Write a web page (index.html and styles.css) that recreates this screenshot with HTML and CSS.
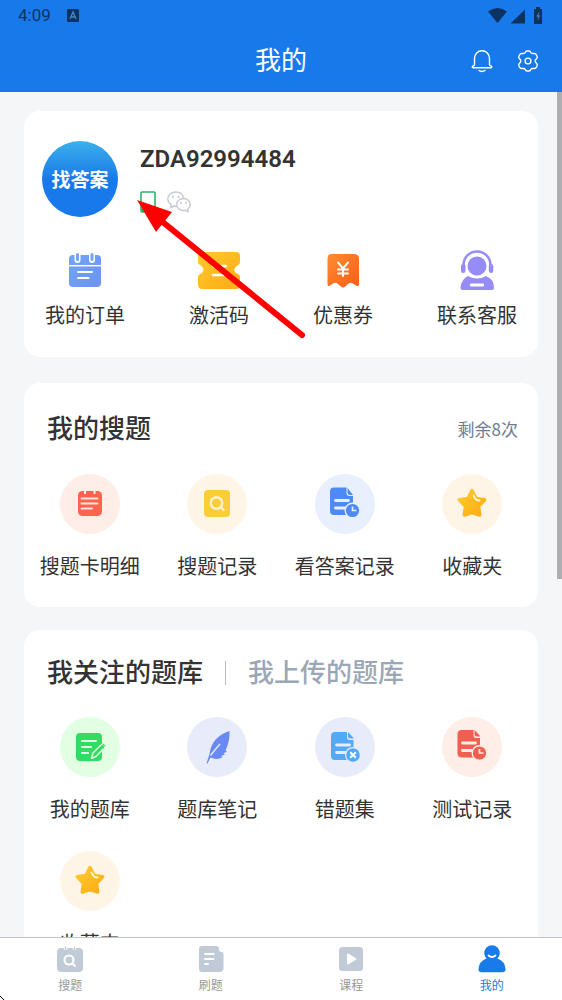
FILE: index.html
```html
<!DOCTYPE html>
<html lang="zh-CN">
<head>
<meta charset="utf-8">
<meta name="viewport" content="width=device-width, initial-scale=1">
<title>我的</title>
<link rel="stylesheet" href="styles.css">
</head>
<body>
<div class="app">
  <header class="header">
    <div class="status">
      <span class="clock">4:09</span>
      <svg class="status-app" width="12" height="13" viewBox="0 0 12 13"><rect width="12" height="13" rx="1.500" fill="#0b3263"/><path d="M3 10 6 3l3 7M4.200 8h3.600" fill="none" stroke="#4a86cc" stroke-width="1.300"/></svg>
      <svg class="status-icons" width="56" height="17" viewBox="0 0 56 17" fill="#0b3263">
        <path d="M0 4.500Q9.500-2.500 19 4.500L9.500 16Z"/>
        <path d="M22.500 16.500 37 2.500v14Z"/>
        <path d="M46 2h2V0h4v2h2v15h-8Z"/>
        <path d="M51.500 4.500 48 9.500h1.800v4l2.500-5.200h-1.800z" fill="#3d7cc4"/>
      </svg>
    </div>
    <div class="titlebar">
      <h1 class="title">我的</h1>
      <div class="actions">
        <button class="icon-btn" type="button" aria-label="消息"><svg width="22" height="24" viewBox="0 0 22 24" fill="none" stroke="#fff" stroke-width="1.400" stroke-linecap="round" stroke-linejoin="round"><path d="M3.500 16V9.500C3.500 5 6.800 1.700 11 1.700S18.500 5 18.500 9.500V16l2 1.400c.5.800.1 1.400-.7 1.400H2.200c-.8 0-1.200-.6-.7-1.400Z"/><path d="M8 21.500c1.800 1.100 4.200 1.100 6 0"/></svg></button>
        <button class="icon-btn" type="button" aria-label="设置"><svg width="22" height="24" viewBox="0 0 22 24" fill="none" stroke="#fff" stroke-width="1.400" stroke-linejoin="round"><path d="M8.300 3.500Q8.700 2 10 2h2q1.300 0 1.700 1.500.8 1.300 2.500 1h1.300q1.400.1 2 1.500l.7 1.500q.4 1.200-.6 2.100-1.400 1.100-1.400 2.400t1.400 2.400q1 .9.600 2.100l-.7 1.500q-.6 1.400-2 1.500h-1.300q-1.700-.3-2.500 1-.4 1.500-1.700 1.500h-2q-1.300 0-1.700-1.500-.8-1.300-2.500-1H4.500q-1.400-.1-2-1.500l-.7-1.500q-.4-1.200.6-2.100Q3.800 13.300 3.800 12T2.400 9.600q-1-.9-.6-2.100L2.500 6q.6-1.400 2-1.500h1.300q1.700.3 2.500-1Z"/><circle cx="11" cy="12" r="2.900"/></svg></button>
      </div>
    </div>
  </header>

  <main class="content">
    <section class="card profile">
      <div class="user">
        <div class="avatar">找答案</div>
        <div class="user-info">
          <h2 class="username">ZDA92994484</h2>
          <div class="bindings">
            <svg width="16" height="22" viewBox="0 0 16 22"><rect x="1" y="1" width="14" height="20" rx="1" fill="none" stroke="#2fb46a" stroke-width="1.600"/><path d="M1 17.500h14V21H1z" fill="#2fb46a"/></svg>
            <svg width="24" height="22" viewBox="0 0 24 22" fill="none" stroke="#c6c9d2" stroke-width="1.400" stroke-linecap="round" stroke-linejoin="round"><path d="M9.500 15.200 7 15l-3.300 1.600.6-2.900A7.300 7.300 0 0 1 .8 8C.8 4 4.200 1 8.700 1c4 0 7 2.300 7.800 5.500"/><path d="M16.500 7.500c-3.900 0-6.800 2.600-6.800 6s2.900 6 6.800 6l2-.2 2.800 1.500-.5-2.500c1.500-1.200 2.400-2.900 2.400-4.800 0-3.400-2.900-6-6.700-6Z"/><path d="M6 5.500v.500M11.500 5.500v.500M14 11.700v.300M19 11.700v.300" stroke-width="1.800"/></svg>
          </div>
        </div>
      </div>
      <nav class="shortcuts">
        <a class="item" href="#orders"><svg width="44" height="44" viewBox="0 0 44 44"><defs><linearGradient id="blue" x2="1" y2="1"><stop stop-color="#72a5f5"/><stop offset="1" stop-color="#6b93f1"/></linearGradient></defs><rect x="6" y="8" width="32" height="32" rx="4" fill="url(#blue)"/><path d="M6 18.700h32" stroke="#fff" stroke-width="1.500"/><g stroke-linecap="round"><path d="M14.500 7v6M29 7v6" stroke="#fff" stroke-width="6"/><path d="M14.500 7.500v5M29 7.500v5" stroke="#72a5f5" stroke-width="3"/><path d="M15 25h14M15 31h10.500" stroke="#fff" stroke-width="2"/></g></svg><span>我的订单</span></a>
        <a class="item" href="#activate"><svg width="44" height="44" viewBox="0 0 44 44"><defs><linearGradient id="gold" x2="1" y2="1"><stop stop-color="#fecb2e"/><stop offset="1" stop-color="#ffab14"/></linearGradient></defs><path d="M5 5h34q4 0 4 4v6q0 2-2 3c-5 3-5 7 0 9q2 1 2 3v7q0 5-4 5H5q-4 0-4-5v-7q0-2 2-3c4.500-2 4.500-6 0-9q-2-1-2-3V9q0-4 4-4Z" fill="url(#gold)"/><path d="M16 19h13M16 28h13" stroke="#fff" stroke-width="2.500" stroke-linecap="round"/></svg><span>激活码</span></a>
        <a class="item" href="#coupons"><svg width="44" height="44" viewBox="0 0 44 44"><defs><linearGradient id="orange" x2="1" y2="1"><stop stop-color="#ff8b31"/><stop offset="1" stop-color="#ff5d16"/></linearGradient></defs><path d="M10 7h23q5 0 5 5v25q0 3-3 1.500L31 36q-2-1-4 1l-3.500 3q-1.500 1-3 0L17 37q-2-2-4-1l-4 2.500q-2.500 1.500-2.500-1.500V12q0-5 3.500-5Z" fill="url(#orange)"/><path d="m17 15.500 5 6 5-6M22 22v7M17 22.500h10M17 26.500h10" fill="none" stroke="#fff" stroke-width="2" stroke-linecap="round"/></svg><span>优惠券</span></a>
        <a class="item" href="#service"><svg width="44" height="44" viewBox="0 0 44 44" fill="#968cf8"><circle cx="22" cy="19" r="9.500"/><path d="M8.500 20v-2a13.500 13.500 0 0 1 27 0v2" fill="none" stroke="#968cf8" stroke-width="2.500"/><rect x="6" y="17" width="4.500" height="9" rx="2.200"/><rect x="33.800" y="17" width="4.500" height="9" rx="2.200"/><path d="M13 29q9 5 18 0 8 3 8 12 0 2-2 2H8q-2.500 0-2.500-2.500Q6.500 32 13 29Z"/><rect x="15" y="36.500" width="14" height="3" rx="1" fill="#fff"/></svg><span>联系客服</span></a>
      </nav>
      <svg class="pointer-arrow" width="172" height="143" viewBox="0 0 172 143" aria-hidden="true"><path d="m22 19 143 116" stroke="red" stroke-width="6" stroke-linecap="round"/><path d="m0 0 35 12-16 20Z" fill="red"/></svg>
    </section>

    <section class="card search">
      <div class="card-head">
        <h2 class="card-title">我的搜题</h2>
        <span class="remaining">剩余8次</span>
      </div>
      <nav class="grid">
        <a class="item" href="#card-detail"><svg class="disc" viewBox="0 0 60 60"><circle cx="30" cy="30" r="30" fill="#ffede8"/><rect x="18" y="17" width="24" height="25" rx="4.500" fill="#fe6350"/><path d="M25 16v4M34.500 16v4" stroke="#ffede8" stroke-width="2"/><path d="M21.500 24.500h16M21.500 29.500h16M21.500 34.500H32" stroke="#ffe4df" stroke-width="2" stroke-linecap="round"/></svg><span>搜题卡明细</span></a>
        <a class="item" href="#search-log"><svg class="disc" viewBox="0 0 60 60"><circle cx="30" cy="30" r="30" fill="#fff5e7"/><rect x="17" y="16" width="26" height="27" rx="4" fill="#fbce38"/><g fill="none" stroke="#fff1cf" stroke-width="2.400" stroke-linecap="round"><circle cx="29.500" cy="29" r="5.800"/><path d="m34 33.500 2.500 2.500"/></g></svg><span>搜题记录</span></a>
        <a class="item" href="#answer-log"><svg class="disc" viewBox="0 0 60 60"><circle cx="30" cy="30" r="30" fill="#e8f0fe"/><path d="M19 13.500h12.500V19q0 3 3 3h3.500v19H19q-4 0-4-4V17.500q0-4 4-4Z" fill="#4e8af7"/><path d="M32.500 14v4q0 3 3 3H38Z" fill="#4e8af7"/><path d="M20.500 26.500h13M20.500 34h10" stroke="#e8f0fe" stroke-width="2.800" stroke-linecap="round"/><circle cx="37.500" cy="36.500" r="8" fill="#e8f0fe"/><circle cx="37.500" cy="36.500" r="6.600" fill="#4e8af7"/><path d="M37.500 32.500v4h4" fill="none" stroke="#e8f0fe" stroke-width="1.700"/></svg><span>看答案记录</span></a>
        <a class="item" href="#favorites"><svg class="disc" viewBox="0 0 60 60"><circle cx="30" cy="30" r="30" fill="#fff5e7"/><path d="m30 16.500 4 8 8.700 1.300-6.200 6.500 1.200 8.700-7.700-2.500-7.700 2.500 1.200-8.700-6.200-6.500L26 24.500Z" fill="url(#gold)" stroke="url(#gold)" stroke-width="3.500" stroke-linejoin="round"/><path d="m31.500 21.500 2 3.500q1 1.500 4 1.500" fill="none" stroke="#fff3d6" stroke-width="1.800" stroke-linecap="round"/></svg><span>收藏夹</span></a>
      </nav>
    </section>

    <section class="card banks">
      <div class="tabs">
        <button class="tab tab-active" type="button">我关注的题库</button>
        <span class="divider"></span>
        <button class="tab" type="button">我上传的题库</button>
      </div>
      <nav class="grid">
        <a class="item" href="#my-bank"><svg class="disc" viewBox="0 0 60 60"><circle cx="30" cy="30" r="30" fill="#e2ffe4"/><rect x="16" y="16" width="26" height="28" rx="4" fill="#32dc63"/><path d="M22 24h14M22 30h9M22 36h6" stroke="#e2ffe4" stroke-width="2.200" stroke-linecap="round"/><path d="m33 36 8-8q2-1.500 3.500 0 .8 1.200-.3 3L36 39.500l-4.500 1.700Z" fill="#32dc63" stroke="#e2ffe4" stroke-width="1.500" stroke-linejoin="round"/><path d="m41 29.500 3 2M42.500 27q2 0 2.500 2.500" fill="none" stroke="#32dc63" stroke-width="1"/></svg><span>我的题库</span></a>
        <a class="item" href="#notes"><svg class="disc" viewBox="0 0 60 60"><circle cx="30" cy="30" r="30" fill="#e8ecfa"/><path d="M42.500 14C32 17.500 24 24 22.500 37L19.500 46.500h1l3-6Q30 43.500 36 40l-2-1 4-1.500-1.500-1 3.500-2-1.500-1Q43 24 42.500 14Z" fill="#698af5"/><path d="M23.500 38.500q5-6.500 9.500-11.500" fill="none" stroke="#e8ecfa" stroke-width="1.400"/></svg><span>题库笔记</span></a>
        <a class="item" href="#mistakes"><svg class="disc" viewBox="0 0 60 60"><circle cx="30" cy="30" r="30" fill="#e8ecfa"/><path d="M20 15h12v5.500q0 2.500 3 2.500h3.500v20H20q-4 0-4-4V19q0-4 4-4Z" fill="#52a9f5"/><path d="M33 15v4.500q0 2 2.500 2H39Z" fill="#52a9f5"/><path d="M21.500 28h13M21.500 35.500H30" stroke="#e8ecfa" stroke-width="2.800" stroke-linecap="round"/><circle cx="38" cy="38" r="8" fill="#e8ecfa"/><circle cx="38" cy="38" r="6.800" fill="#52a9f5"/><path d="m35.200 35.200 5.600 5.600m0-5.600-5.600 5.600" stroke="#fff" stroke-width="2"/></svg><span>错题集</span></a>
        <a class="item" href="#tests"><svg class="disc" viewBox="0 0 60 60"><circle cx="30" cy="30" r="30" fill="#ffede8"/><path d="M20 13h11.500v5.500q0 2.500 3 2.500h3.500v19.500H20q-4.500 0-4.500-4V17q0-4 4.500-4Z" fill="#f05f50"/><path d="M32.500 13v4q0 2.500 2.500 2.500h3.500Z" fill="#f05f50"/><path d="M20.500 26h13M20.500 33.500h9" stroke="#ffede8" stroke-width="2.800" stroke-linecap="round"/><circle cx="37.500" cy="36" r="8" fill="#ffede8"/><circle cx="37.500" cy="36" r="6.600" fill="#f05f50"/><path d="M37.500 32v4h4" fill="none" stroke="#ffede8" stroke-width="1.700"/></svg><span>测试记录</span></a>
        <a class="item" href="#bank-favorites"><svg class="disc" viewBox="0 0 60 60"><circle cx="30" cy="30" r="30" fill="#fff5e7"/><path d="m30 16.500 4 8 8.700 1.300-6.200 6.500 1.200 8.700-7.700-2.500-7.700 2.500 1.200-8.700-6.200-6.500L26 24.500Z" fill="url(#gold)" stroke="url(#gold)" stroke-width="3.500" stroke-linejoin="round"/><path d="m31.500 21.500 2 3.500q1 1.500 4 1.500" fill="none" stroke="#fff3d6" stroke-width="1.800" stroke-linecap="round"/></svg><span>收藏夹</span></a>
      </nav>
    </section>
  </main>

  <nav class="bottom-nav">
    <a class="nav-item" href="#search"><svg width="28" height="28" viewBox="0 0 28 28"><rect x="1" y="3" width="26" height="24" rx="4" fill="#c1cad7"/><path d="M9.500 1v4M18.500 1v4" stroke="#fff" stroke-width="3.500"/><path d="M9.500 1.500v4M18.500 1.500v4" stroke="#c1cad7" stroke-width="1.500"/><g fill="none" stroke="#fff" stroke-width="2.200" stroke-linecap="round"><circle cx="13" cy="15" r="4.500"/><path d="m16.500 18.500 2.500 2.500"/></g></svg><span>搜题</span></a>
    <a class="nav-item" href="#practice"><svg width="28" height="28" viewBox="0 0 28 28"><path d="M5 1h14q3 0 3 3v1q0 2 3 2 1.500 0 1.500 2v14q0 4-4 4H5q-3 0-3-3V4q0-3 3-3Z" fill="#c1cad7"/><path d="M8 9h8.500M8 14h8.500M8 19h3" stroke="#fff" stroke-width="2" stroke-linecap="round"/></svg><span>刷题</span></a>
    <a class="nav-item" href="#courses"><svg width="28" height="28" viewBox="0 0 28 28"><rect x="2" y="2" width="24" height="24" rx="3.500" fill="#c1cad7"/><path d="M11 9.500v9l7.500-4.500Z" fill="#fff" stroke="#fff" stroke-width="2" stroke-linejoin="round"/></svg><span>课程</span></a>
    <a class="nav-item nav-active" href="#me"><svg width="28" height="28" viewBox="0 0 28 28"><path d="M8.500 13.500a7.800 7.800 0 1 1 11 0Q27 16 27.500 24.500q0 2.700-3 2.700h-21q-3 0-3-2.700Q1 16 8.500 13.500Z" fill="#197bea"/><path d="M10.500 10.500q3.500 3 7 0" fill="none" stroke="#fff" stroke-width="1.700" stroke-linecap="round"/></svg><span>我的</span></a>
  </nav>
  <div class="scrollbar"></div>
  <svg class="cursor" width="4" height="5" viewBox="0 0 4 5" aria-hidden="true"><path d="M0 1h1v1h1v1h1v1h1v1H3V4H2V3H1V2H0z"/></svg>
</div>
</body>
</html>
```
FILE: styles.css
```css
* { box-sizing: border-box; }
body {
  margin: 0;
  color: #333;
  font-family: Roboto, "Noto Sans CJK SC", sans-serif;
}
h1, h2 { margin: 0; }
a { color: inherit; text-decoration: none; }
button { padding: 0; border: 0; background: none; color: inherit; font: inherit; }
svg { display: block; flex: none; }

.app {
  position: relative;
  display: flex;
  flex-direction: column;
  height: 100vh;
  overflow: hidden;
  background: #f5f6f8;
}

.header { flex: none; background: #187aea; color: #fff; }
.status {
  display: flex;
  align-items: center;
  gap: 16px;
  height: 30px;
  padding: 0 18px;
  color: #0b3263;
}
.clock { font-size: 17px; line-height: 30px; }
.status-icons { margin-left: auto; }
.titlebar {
  display: grid;
  grid-template-columns: 1fr auto 1fr;
  align-items: center;
  height: 62px;
  padding: 0 23px;
}
.title { grid-column: 2; font-size: 26px; font-weight: 400; line-height: 62px; }
.actions { display: flex; justify-content: flex-end; gap: 24px; }
.icon-btn { width: 22px; height: 24px; }

.content {
  flex: 1;
  min-height: 0;
  overflow: hidden;
  padding: 19px 24px 0;
}
.card { border-radius: 16px; background: #fff; }
.profile { position: relative; margin-bottom: 26px; padding: 30px 21px 26px; }
.search { margin-bottom: 23px; padding: 26px 2px; }
.banks { padding: 23px 2px 26px; }

.user { display: flex; gap: 22px; margin: 0 -3px; }
.avatar {
  width: 76px;
  height: 76px;
  border-radius: 50%;
  background: linear-gradient(#3cb0ec, #187aea 50%);
  color: #fff;
  font-size: 19px;
  font-weight: 700;
  line-height: 80px;
  text-align: center;
}
.user-info { display: flex; flex-direction: column; gap: 18px; padding-top: 4px; }
.username { font-size: 24px; font-weight: 600; line-height: 28px; }
.bindings { display: flex; gap: 11px; }

.shortcuts { display: flex; justify-content: space-between; margin-top: 30px; }
.item {
  display: flex;
  flex-direction: column;
  align-items: center;
  font-size: 20px;
  line-height: 30px;
  white-space: nowrap;
}
.shortcuts .item { gap: 10px; }
.pointer-arrow { position: absolute; left: 113px; top: 89px; }

.card-head {
  display: flex;
  justify-content: space-between;
  align-items: center;
  padding: 0 18px 0 21px;
}
.card-title { font-size: 26px; font-weight: 500; line-height: 40px; }
.remaining {
  color: #707b91;
  font-family: "Noto Sans CJK SC", sans-serif;
  font-size: 17px;
  line-height: 24px;
}
.grid {
  display: grid;
  grid-template-columns: repeat(4, 1fr);
  row-gap: 26px;
  margin-top: 25px;
}
.grid .item { gap: 18px; }
.disc { width: 60px; height: 60px; }
.search .grid { margin-bottom: -1px; }

.tabs { display: flex; align-items: center; gap: 22px; padding: 0 21px; }
.tab { color: #9ba7b7; font-size: 26px; font-weight: 500; line-height: 40px; }
.tab-active { color: #333; }
.divider { width: 1px; height: 24px; background: #b8bec9; }
.banks .grid { margin-top: 24px; }

.bottom-nav {
  flex: none;
  display: grid;
  grid-template-columns: repeat(4, 1fr);
  border-top: 1px solid #bfc2c6;
  background: #fff;
}
.nav-item {
  display: flex;
  flex-direction: column;
  align-items: center;
  gap: 2px;
  padding: 7px 0 3px;
  color: #999;
  font-size: 12px;
  line-height: 22px;
}
.nav-active { color: #197bea; }

.scrollbar {
  position: absolute;
  top: 92px;
  right: 0;
  width: 5px;
  height: 487px;
  background: #adafb2;
}
.cursor { position: absolute; left: 0; bottom: 0; }
```
